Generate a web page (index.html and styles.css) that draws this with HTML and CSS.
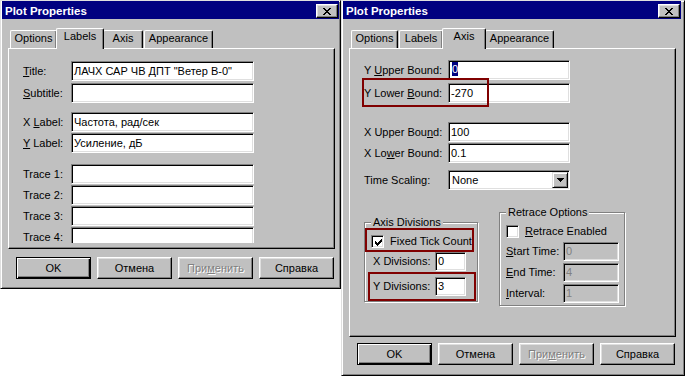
FILE: index.html
```html
<!DOCTYPE html>
<html lang="ru">
<head>
<meta charset="utf-8">
<title>Plot Properties</title>
<link rel="stylesheet" href="styles.css">
</head>
<body>
<div class="desktop">

  <section class="win win-left">
    <header class="titlebar">
      <span class="title">Plot Properties</span>
      <div class="close"><svg viewBox="0 0 8 7" shape-rendering="crispEdges"><path d="M0 0h2v1H0zM6 0h2v1H6zM1 1h2v1H1zM5 1h2v1H5zM2 2h4v1H2zM3 3h2v1H3zM2 4h4v1H2zM1 5h2v1H1zM5 5h2v1H5zM0 6h2v1H0zM6 6h2v1H6z" fill="#000"/></svg></div>
    </header>
    <nav class="tabs">
      <div class="tab t-options">Options</div>
      <div class="tab t-labels sel">Labels</div>
      <div class="tab t-axis">Axis</div>
      <div class="tab t-appear">Appearance</div>
    </nav>
    <div class="panel panel-left">
      <div class="page page-labels">
        <div class="row"><span class="lbl"><u>T</u>itle:</span><div class="edit">ЛАЧХ САР ЧВ ДПТ "Ветер В-0"</div></div>
        <div class="row mt2"><span class="lbl"><u>S</u>ubtitle:</span><div class="edit"></div></div>
        <div class="row mt9"><span class="lbl">X <u>L</u>abel:</span><div class="edit">Частота, рад/сек</div></div>
        <div class="row mt1"><span class="lbl"><u>Y</u> Label:</span><div class="edit">Усиление, дБ</div></div>
        <div class="row mt11"><span class="lbl">Trace 1:</span><div class="edit"></div></div>
        <div class="row mt1"><span class="lbl">Trace 2:</span><div class="edit"></div></div>
        <div class="row mt1"><span class="lbl">Trace 3:</span><div class="edit"></div></div>
        <div class="row mt1"><span class="lbl">Trace 4:</span><div class="edit"></div></div>
      </div>
    </div>
    <div class="buttons buttons-left">
      <div class="btn default">OK</div>
      <div class="btn">Отмена</div>
      <div class="btn disabled">При<u>м</u>енить</div>
      <div class="btn">Справка</div>
    </div>
  </section>

  <section class="win win-right">
    <header class="titlebar">
      <span class="title">Plot Properties</span>
      <div class="close"><svg viewBox="0 0 8 7" shape-rendering="crispEdges"><path d="M0 0h2v1H0zM6 0h2v1H6zM1 1h2v1H1zM5 1h2v1H5zM2 2h4v1H2zM3 3h2v1H3zM2 4h4v1H2zM1 5h2v1H1zM5 5h2v1H5zM0 6h2v1H0zM6 6h2v1H6z" fill="#000"/></svg></div>
    </header>
    <nav class="tabs">
      <div class="tab t-options">Options</div>
      <div class="tab t-labels">Labels</div>
      <div class="tab t-axis sel">Axis</div>
      <div class="tab t-appear">Appearance</div>
    </nav>
    <div class="panel panel-right">
      <div class="page page-axis">
        <div class="row"><span class="lbl">Y <u>U</u>pper Bound:</span><div class="edit"><span class="selected">0</span></div></div>
        <div class="row mt3"><span class="lbl">Y Lower <u>B</u>ound:</span><div class="edit">-270</div></div>
        <div class="row mt19"><span class="lbl">X Upper Bou<u>n</u>d:</span><div class="edit">100</div></div>
        <div class="row mt1"><span class="lbl">X Lo<u>w</u>er Bound:</span><div class="edit">0.1</div></div>
        <div class="row mt7"><span class="lbl">Time Scaling:</span>
          <div class="edit combo"><span class="combo-text">None</span>
            <div class="ddbtn"><svg viewBox="0 0 7 4" shape-rendering="crispEdges"><path d="M0 0h7v1H0zM1 1h5v1H1zM2 2h3v1H2zM3 3h1v1H3z" fill="#000"/></svg></div>
          </div>
        </div>

        <div class="groups">
          <fieldset class="group group-axis">
            <legend>Axis Divisions</legend>
            <div class="crow">
              <div class="chk"><svg viewBox="0 0 7 7" shape-rendering="crispEdges"><path d="M6 0h1v1H6zM5 1h2v1H5zM0 2h1v1H0zM4 2h3v1H4zM0 3h2v1H0zM3 3h3v1H3zM0 4h5v1H0zM1 5h3v1H1zM2 6h1v1H2z" fill="#000"/></svg></div>
              <span class="ctext">Fixed Tick Count</span>
            </div>
            <div class="frow mt1"><span class="glbl glbl-axis">X Divisions:</span><div class="edit small">0</div></div>
            <div class="frow mt6"><span class="glbl glbl-axis">Y Divisions:</span><div class="edit small">3</div></div>
          </fieldset>

          <fieldset class="group group-retrace">
            <legend>Retrace Options</legend>
            <div class="crow">
              <div class="chk"></div>
              <span class="ctext"><u>R</u>etrace Enabled</span>
            </div>
            <div class="frow mt1"><span class="glbl glbl-retrace"><u>S</u>tart Time:</span><div class="edit dis">0</div></div>
            <div class="frow mt2"><span class="glbl glbl-retrace"><u>E</u>nd Time:</span><div class="edit dis">4</div></div>
            <div class="frow mt2"><span class="glbl glbl-retrace"><u>I</u>nterval:</span><div class="edit dis">1</div></div>
          </fieldset>
        </div>
      </div>
      <div class="mark mark-ylower"></div>
      <div class="mark mark-fixed"></div>
      <div class="mark mark-ydiv"></div>
    </div>
    <div class="buttons buttons-right">
      <div class="btn default">OK</div>
      <div class="btn">Отмена</div>
      <div class="btn disabled">При<u>м</u>енить</div>
      <div class="btn">Справка</div>
    </div>
  </section>

</div>
</body>
</html>
```

FILE: styles.css
```css
* { box-sizing: border-box; }

html, body {
  margin: 0;
  padding: 0;
  background: #fff;
}

body {
  font: 11px/13px "Liberation Sans", Arial, sans-serif;
  color: #000;
}

u {
  text-decoration: underline;
  text-underline-offset: 1px;
}

.desktop {
  display: flex;
  align-items: flex-start;
}

/* ---------- window frame ---------- */
.win {
  background: #c0c0c0;
  border: 1px solid;
  border-color: #dfdfdf #000 #000 #dfdfdf;
  box-shadow: inset 1px 1px #fff, inset -1px -1px #808080;
  padding: 0 1px 0 1px;
  display: flex;
  flex-direction: column;
}

.win-left {
  width: 341px;
  height: 289px;
}

.win-right {
  width: 344px;
  height: 376px;
  padding-right: 3px;
}

.titlebar {
  height: 18px;
  flex: none;
  background: #000080;
  display: flex;
  justify-content: space-between;
  align-items: flex-start;
  padding-left: 3px;
}

.title {
  color: #fff;
  font-weight: bold;
  font-size: 11.5px;
  line-height: 16px;
  padding-top: 2px;
  white-space: nowrap;
}

.close {
  width: 22px;
  height: 14px;
  margin: 3px 1px 0 0;
  background: #c0c0c0;
  border: 1px solid;
  border-color: #fff #000 #000 #fff;
  box-shadow: inset -1px -1px #808080, inset 1px 1px #dfdfdf;
  display: flex;
  align-items: center;
  justify-content: center;
}

.close svg {
  display: block;
  width: 8px;
  height: 7px;
}

/* ---------- tabs ---------- */
.tabs {
  display: flex;
  align-items: flex-end;
  height: 20px;
  margin: 9px 0 0 6px;
  flex: none;
}

.tab {
  box-sizing: content-box;
  height: 17px;
  margin-left: 1px;
  background: #c0c0c0;
  border-top: 1px solid #fff;
  border-left: 1px solid #fff;
  border-right: 1px solid #000;
  border-radius: 2px 2px 0 0;
  box-shadow: inset -1px 0 #808080;
  text-align: center;
  line-height: 13px;
  padding-top: 0;
  white-space: nowrap;
}

.tab:first-child { margin-left: 2px; }

.tab::before {
  content: "";
  display: block;
  height: 1px;
}

.t-options { width: 45px; }
.t-labels  { width: 42px; }
.t-axis    { width: 38px; }
.t-appear  { width: 67px; }

.tab.sel {
  position: relative;
  z-index: 1;
  height: 20px;
  padding: 0 2px;
  margin-left: -1px;
  margin-right: -2px;
  margin-bottom: -1px;
}

/* ---------- panel ---------- */
.panel {
  position: relative;
  flex: none;
  width: 327px;
  margin-left: 6px;
  border: 1px solid;
  border-color: #fff #000 #000 #fff;
  box-shadow: inset -1px -1px #808080;
}

.panel-left  { height: 201px; }
.panel-right { height: 289px; }

.page { padding-left: 14px; }

.page-labels {
  padding-top: 12px;
  height: 194px;
  overflow: hidden;
}

.page-axis { padding-top: 11px; }

.row {
  display: flex;
  align-items: center;
  height: 20px;
}

.lbl { white-space: nowrap; flex: none; }
.page-labels .lbl { width: 48px; }
.page-axis .lbl { width: 84px; }

.mt1  { margin-top: 1px; }
.mt2  { margin-top: 2px; }
.mt3  { margin-top: 3px; }
.mt6  { margin-top: 6px; }
.mt7  { margin-top: 7px; }
.mt9  { margin-top: 9px; }
.mt11 { margin-top: 11px; }
.mt19 { margin-top: 19px; }

/* ---------- edit boxes ---------- */
.edit {
  height: 20px;
  flex: none;
  background: #fff;
  border: 1px solid;
  border-color: #808080 #fff #fff #808080;
  box-shadow: inset 1px 1px #000, inset -1px -1px #dfdfdf;
  padding: 0 2px;
  line-height: 18px;
  white-space: nowrap;
  overflow: hidden;
}

.page-labels .edit { width: 183px; }
.page-axis .edit { width: 122px; }

.selected {
  display: inline-block;
  background: #000080;
  color: #fff;
  line-height: 14px;
  padding: 0 0 0 0;
  margin-left: 1px;
  vertical-align: 1px;
}

.combo {
  display: flex;
  align-items: center;
  justify-content: space-between;
  padding: 1px;
}

.combo-text { padding-left: 2px; line-height: 16px; }

.ddbtn {
  width: 16px;
  height: 16px;
  background: #c0c0c0;
  border: 1px solid;
  border-color: #dfdfdf #000 #000 #dfdfdf;
  box-shadow: inset 1px 1px #fff, inset -1px -1px #808080;
  display: flex;
  align-items: center;
  justify-content: center;
}

.ddbtn svg { display: block; width: 7px; height: 4px; }

/* ---------- group boxes ---------- */
.groups {
  display: flex;
  align-items: flex-start;
  margin-top: 16px;
}

.group {
  margin: 0;
  padding: 0 5px 0 6px;
  min-width: 0;
  border: 1px solid #808080;
  box-shadow: inset 1px 1px #fff, 1px 1px 0 #fff;
}

.group legend {
  padding: 0 2px;
  line-height: 13px;
  background: #c0c0c0;
  white-space: nowrap;
}

.group-axis {
  width: 114px;
  margin-top: 10px;
  padding-bottom: 5px;
}

.group-retrace {
  width: 126px;
  margin-left: 21px;
  padding-bottom: 2px;
}

.crow {
  display: flex;
  align-items: center;
  height: 19px;
  margin-top: 3px;
  gap: 6px;
  white-space: nowrap;
}

.chk {
  width: 13px;
  height: 13px;
  flex: none;
  background: #fff;
  border: 1px solid;
  border-color: #808080 #fff #fff #808080;
  box-shadow: inset 1px 1px #000, inset -1px -1px #dfdfdf;
  display: flex;
  align-items: center;
  justify-content: center;
  padding: 1px 0 0 1px;
}

.chk svg { display: block; width: 7px; height: 7px; }

.frow {
  display: flex;
  align-items: center;
  height: 19px;
}

.glbl { white-space: nowrap; flex: none; }
.glbl-axis { width: 64px; padding-left: 2px; }
.glbl-retrace { width: 57px; }

.edit.small {
  width: 31px;
  height: 19px;
  line-height: 17px;
}

.edit.dis {
  width: 56px;
  height: 19px;
  line-height: 17px;
  background: #c0c0c0;
  color: #808080;
}

/* ---------- annotation marks ---------- */
.mark {
  position: absolute;
  border: 2px solid #800000;
}

.mark-ylower { left: 12px; top: 29px; width: 127px; height: 29px; }
.mark-fixed  { left: 15px; top: 179px; width: 109px; height: 24px; }
.mark-ydiv   { left: 18px; top: 223px; width: 108px; height: 29px; }

/* ---------- buttons ---------- */
.buttons {
  display: flex;
  gap: 6px;
  margin-left: 14px;
  flex: none;
}

.buttons-left  { margin-top: 8px; }
.buttons-right { margin-top: 6px; }

.btn {
  width: 75px;
  height: 22px;
  background: #c0c0c0;
  border: 1px solid;
  border-color: #fff #000 #000 #fff;
  box-shadow: inset -1px -1px #808080, inset 1px 1px #dfdfdf;
  text-align: center;
  line-height: 20px;
  white-space: nowrap;
}

.btn.default {
  border-color: #000;
  box-shadow: inset 1px 1px #fff, inset -1px -1px #000, inset -2px -2px #808080;
}

.btn.disabled {
  color: #808080;
  text-shadow: 1px 1px 0 #fff;
}
```
